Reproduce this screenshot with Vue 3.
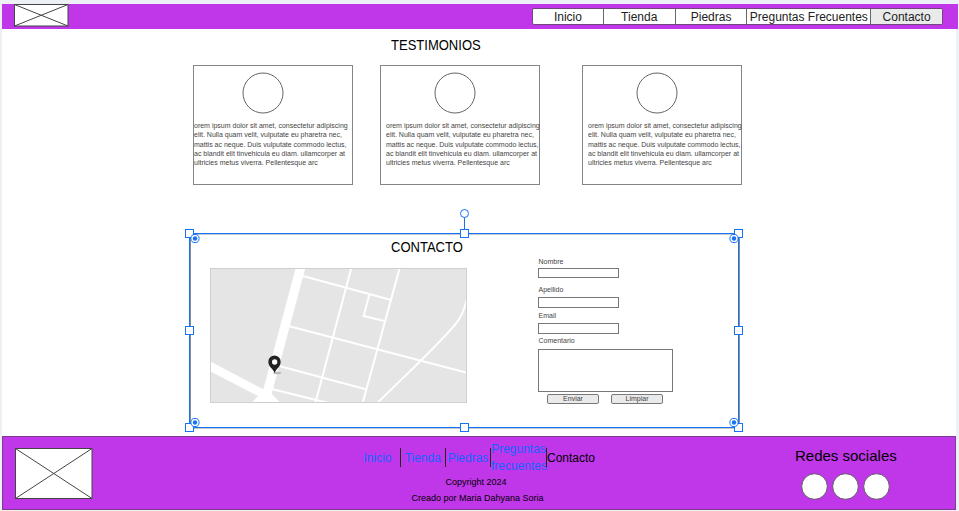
<script setup>
const navItems = ['Inicio', 'Tienda', 'Piedras', 'Preguntas Frecuentes', 'Contacto']
const footerLinks = ['Inicio', 'Tienda', 'Piedras', 'Preguntas frecuentes']
const quote = [
  'orem ipsum dolor sit amet, consectetur adipiscing',
  'elit. Nulla quam velit, vulputate eu pharetra nec,',
  'mattis ac neque. Duis vulputate commodo lectus,',
  'ac blandit elit tinvehicula eu diam. ullamcorper at',
  'ultricies metus viverra. Pellentesque arc',
]
const corners = [[189.5, 233.5], [464.5, 233.5], [738.5, 233.5], [189.5, 330.5], [738.5, 330.5], [189.5, 427.5], [464.5, 427.5], [738.5, 427.5]]
const anchors = [[195, 238.5], [734, 238.5], [195, 422.5], [734, 422.5]]
</script>

<template>
  <div class="canvas">
    <div class="page">
      <header class="header">
        <svg class="logo" width="55" height="23" viewBox="0 0 55 23">
          <rect x=".5" y=".5" width="53.500" height="21.500" />
          <path d="M.5 .5 54 22M54 .5 .5 22" />
        </svg>
        <nav class="nav">
          <span v-for="(item, i) in navItems" :key="item" class="tab" :class="{ wide: i === 3, active: i === 4 }">{{ item }}</span>
        </nav>
      </header>

      <main class="main">
        <h2 class="title">TESTIMONIOS</h2>
        <section class="cards">
          <article v-for="n in 3" :key="n" class="card" :class="'card-' + n">
            <svg class="avatar" width="42" height="42" viewBox="0 0 42 42"><circle cx="21" cy="21" r="20" /></svg>
            <p class="quote"><span v-for="line in quote" :key="line">{{ line }}</span></p>
          </article>
        </section>

        <section class="contact">
          <h2 class="title contact-title">CONTACTO</h2>
          <div class="contact-body">
            <svg class="map" width="257" height="135" viewBox="90 204 771 405">
              <rect x="90" y="204" width="771" height="405" fill="#e5e5e5" />
              <g fill="none" stroke="#fff" stroke-width="6">
                <path d="M366 227 631 299M514 204 406 609M659 204 548 609M568 284 551 348 613 363M328 379 861 518M300 499 557 568M275 567 445 609" />
                <path d="M861 296C852 330 845 350 826 373C760 450 690 512 592 609" />
              </g>
              <path fill="#fff" d="M347 204H376L275 582 302 609H214L234 588 90 514V484L250 568Z" />
              <ellipse cx="292" cy="519" rx="12" ry="4" fill="#bbb" />
              <path fill="#222" fill-rule="evenodd" d="M284 519C279 505 265 501 265 485A18.500 18.500 0 0 1 302 485C302 501 288 505 284 519ZM284 478A8 8 0 1 0 284 494A8 8 0 1 0 284 478Z" />
              <rect x="91.500" y="205.500" width="768" height="402" fill="none" stroke="#cfcfcf" stroke-width="3" />
            </svg>
            <form class="form">
              <label>Nombre</label>
              <div class="field name"></div>
              <label>Apellido</label>
              <div class="field surname"></div>
              <label>Email</label>
              <div class="field email"></div>
              <label>Comentario</label>
              <div class="field comment"></div>
              <div class="actions"><span class="button">Enviar</span><span class="button">Limpiar</span></div>
            </form>
          </div>
          <svg class="selection" width="562" height="226" viewBox="184 208 562 226">
            <path d="M190.500 428V234.500" fill="none" stroke="#8b8b8b" />
            <path d="M190 234.500H738M190 428.500H739" fill="none" stroke="#c4c8cf" />
            <path d="M739.500 234V428" fill="none" stroke="#8b8b8b" />
            <rect x="189.500" y="233.500" width="549" height="194" fill="none" stroke="#1473f6" />
            <path d="M464.500 217V230" stroke="#1473f6" />
            <circle cx="464.500" cy="213.500" r="4" fill="#fff" stroke="#1473f6" />
            <rect v-for="([x, y], i) in corners" :key="i" :x="x - 4" :y="y - 4" width="8" height="8" fill="#fff" stroke="#1473f6" />
            <g v-for="([x, y], i) in anchors" :key="'a' + i">
              <circle :cx="x" :cy="y" r="4.100" fill="#fff" stroke="#1473f6" />
              <circle :cx="x" :cy="y" r="2.200" fill="#1473f6" />
            </g>
          </svg>
        </section>
      </main>

      <footer class="footer">
        <svg class="logo" width="78" height="51" viewBox="0 0 78 51">
          <rect x=".5" y=".5" width="76.500" height="50" />
          <path d="M.5 .5 77 50.500M77 .5 .5 50.500" />
        </svg>
        <div class="footer-center">
          <div class="footer-nav">
            <template v-for="link in footerLinks" :key="link">
              <a class="footer-link">{{ link }}</a><i class="divider"></i>
            </template>
            <span class="current">Contacto</span>
          </div>
          <p class="small copyright">Copyright 2024</p>
          <p class="small">Creado por Maria Dahyana Soria</p>
        </div>
        <div class="social">
          <h3>Redes sociales</h3>
          <div class="dots">
            <svg v-for="n in 3" :key="n" width="27" height="27" viewBox="0 0 27 27"><circle cx="13.500" cy="13.500" r="12.800" /></svg>
          </div>
        </div>
      </footer>
    </div>
  </div>
</template>

<style>
body { background: #edf1f6; overflow: hidden; }
</style>

<style scoped>
* { box-sizing: border-box; }
.canvas {
  height: 511px;
  padding: 4px 3px 0 2px;
  font-family: "Liberation Sans", Arial, sans-serif;
  color: #000;
}
.page { width: 954px; height: 507px; }
.header {
  display: flex;
  width: 956px;
  height: 25px;
  padding-left: 12px;
  background: #c037ea;
}
.logo { display: block; flex: none; fill: #fff; stroke: #454545; }
.nav {
  display: flex;
  width: 411px;
  height: 17px;
  margin: 4px 0 0 463px;
  border: 1px solid #71477e;
  border-radius: 2px;
  overflow: hidden;
  background: #fff;
}
.tab {
  width: 72px;
  border-right: 1px solid #666;
  font-size: 12px;
  line-height: 16px;
  text-align: center;
  white-space: nowrap;
  color: #222;
}
.tab:first-child { width: 71px; }
.tab.wide { width: 124px; }
.tab.active { width: 71px; border: 0; background: #eaeaea; }
.main { height: 407px; padding-top: 8px; background: #fff; }
.title {
  width: 110px;
  margin: 0 0 0 388.5px;
  font-size: 14px;
  font-weight: 400;
  line-height: 16px;
  transform: scaleX(.93);
  transform-origin: left;
}
.cards { display: flex; padding: 12px 0 0 191px; }
.card {
  width: 159.5px;
  height: 120px;
  padding-top: 6px;
  border: 1px solid #858585;
}
.card-2 { margin-left: 27.5px; }
.card-3 { margin-left: 42.5px; }
.avatar { display: block; margin-left: 48px; fill: #fff; stroke: #555; stroke-width: .9; }
.quote {
  margin: 7px 0 0;
  font-size: 7px;
  line-height: 9.3px;
  white-space: nowrap;
  color: #444;
}
.quote span { display: block; }
.card-2, .card-3 { padding-left: 5px; }
.contact {
  position: relative;
  width: 550px;
  height: 195px;
  margin: 48px 0 0 187px;
  padding-top: 6px;
}
.contact-title { margin-left: 201.5px; }
.contact-body { display: flex; padding-left: 21px; }
.map { display: block; flex: none; margin-top: 13px; }
.form { width: 136px; margin: 2px 0 0 71px; }
.form label { display: block; font-size: 7px; line-height: 9px; padding-left: .5px; color: #444; }
.field { width: 81px; height: 11px; border: 1px solid #777; }
.name { height: 10px; margin: 2px 0 7px; }
.surname { margin: 3px 0 3px; }
.email { margin: 3px 0 2px; }
.comment { width: 135px; height: 43px; margin: 4px 0 2px; }
.actions { display: flex; gap: 12px; padding-left: 9px; }
.button {
  width: 52px;
  height: 10px;
  border: 1px solid #777;
  border-radius: 2px;
  background: #eaeaea;
  font-size: 7px;
  line-height: 8px;
  text-align: center;
  color: #444;
}
.selection { position: absolute; left: -5px; top: -25px; }
.footer {
  display: flex;
  height: 74px;
  border: 1px solid #7d3a91;
  background: #c037ea;
}
.footer .logo { margin: 11px 0 0 12px; }
.footer-center { width: 244px; margin: 3px 0 0 262.5px; }
.footer-nav {
  display: grid;
  grid-template-columns: 44px 1px 44.5px 1px 44px 1px 55px 1px 48px;
  align-items: center;
  height: 34px;
  font-size: 12px;
  line-height: 17px;
  text-align: center;
}
.footer-link { color: #1463ff; }
.footer-link, .current { padding-top: 1px; }
.divider { height: 19px; background: #222; }
.small { margin: 0; font-size: 9px; line-height: 16px; text-align: center; }
.copyright { padding-right: 3px; }
.social { width: 104px; margin: 10px 0 0 195.5px; }
.social h3 { margin: 0; font-size: 15px; font-weight: 400; line-height: 18px; white-space: nowrap; }
.dots { display: flex; gap: 4px; padding: 8px 0 0 6px; }
.dots svg { display: block; margin-top: -.5px; fill: #fff; stroke: #555; stroke-width: .9; }
</style>
